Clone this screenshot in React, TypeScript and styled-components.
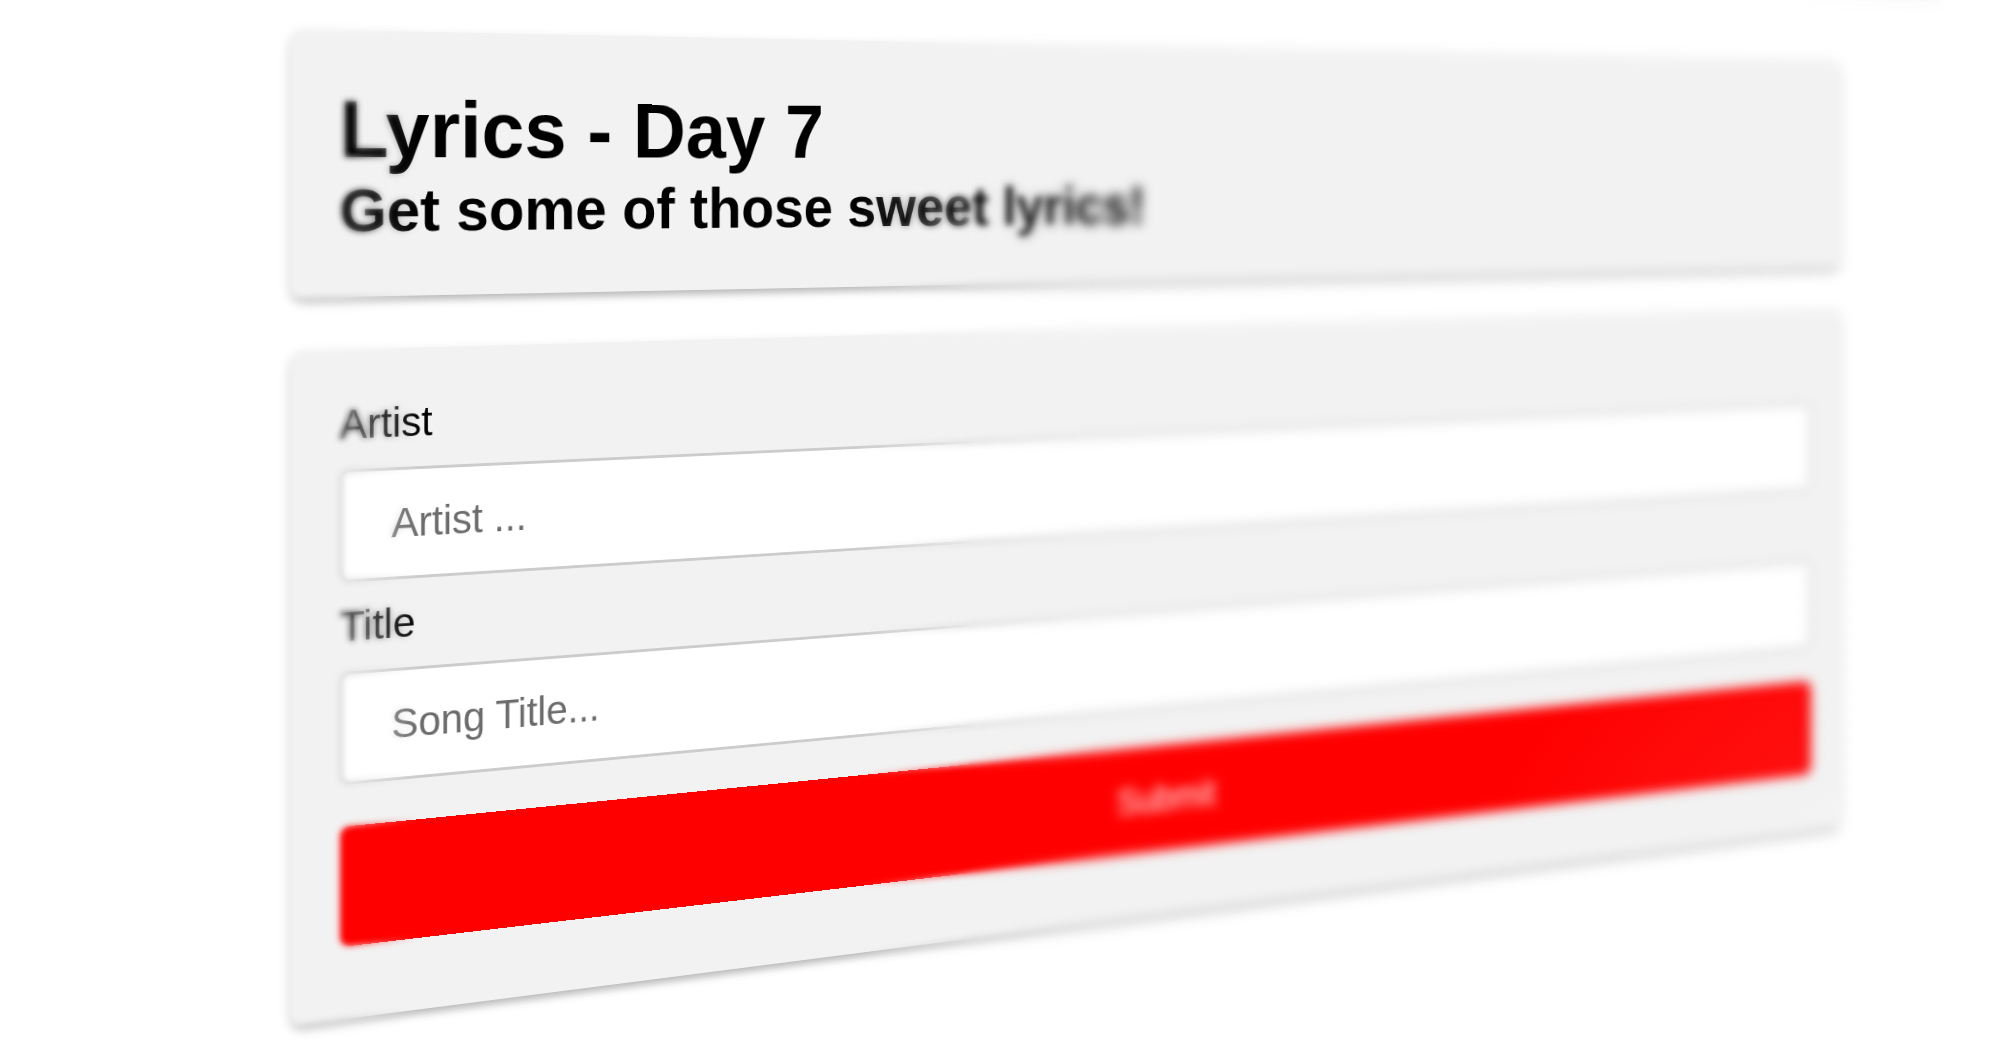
import React, { FormEvent } from "react";
import styled, { createGlobalStyle } from "styled-components";

const GlobalStyle = createGlobalStyle`
  *, *::before, *::after { box-sizing: border-box; }
  body {
    margin: 0;
    background: #fff;
    color: #000;
    font-family: "Liberation Sans", Arial, Helvetica, sans-serif;
  }
`;

/* The viewer's window onto the tilted page. */
const Stage = styled.div`
  position: relative;
  min-height: 100vh;
  overflow: hidden;
  perspective: 3000px;
  perspective-origin: 50% 166px;
`;

const Plane = styled.div`
  display: flex;
  flex-direction: column;
  gap: 52px;
  width: calc(100vw + 24px);
  margin-top: -143px;
  margin-left: 290px;
  transform-origin: 0 0;
  transform: rotateY(26.6deg);
`;

const TopBar = styled.div`
  height: 88px;
  margin: 0 -172px 32px;
  background: #fff;
  box-shadow: 0 4px 10px rgba(0, 0, 0, 0.06);
`;

const Content = styled.main`
  display: flex;
  flex-direction: column;
  gap: 53px;
`;

const Card = styled.section`
  padding: 52px 50px;
  border-radius: 12px;
  background: #f2f2f2;
  box-shadow:
    0 6px 10px -2px rgba(0, 0, 0, 0.26),
    0 3px 12px rgba(0, 0, 0, 0.08);
`;

const Title = styled.h1`
  margin: 0;
  font-size: 82px;
  line-height: 95px;
  font-weight: 700;
`;

const Subtitle = styled.h2`
  margin: 0;
  font-size: 62px;
  line-height: 70px;
  font-weight: 700;
`;

const Form = styled.form`
  display: flex;
  flex-direction: column;
  gap: 21px;
`;

const Label = styled.label`
  font-size: 42px;
  line-height: 48px;
`;

const TextInput = styled.input`
  width: 100%;
  height: 114px;
  padding: 0 50px;
  border: 3px solid #ccc;
  border-radius: 10px;
  background: #fff;
  color: #000;
  font-family: inherit;
  font-size: 42px;

  &::placeholder {
    color: #6c6c6c;
    opacity: 1;
  }
`;

const SubmitButton = styled.button`
  height: 121px;
  margin: 21px 0;
  border: 0;
  border-radius: 10px;
  background: #f00;
  color: #fff;
  font-family: inherit;
  font-size: 42px;
  cursor: pointer;
`;

/* Depth of field: softens what lies outside the focal strip. */
const Focus = styled.div<{ $blur: number; $mask: string }>`
  position: absolute;
  inset: 0;
  pointer-events: none;
  backdrop-filter: blur(${(p) => p.$blur}px);
  mask-image: ${(p) => p.$mask};
`;

const Glow = styled.div`
  position: absolute;
  inset: 0;
  pointer-events: none;
  background: radial-gradient(circle at 100% 100%, rgba(255, 255, 255, 0.16), rgba(255, 255, 255, 0) 25%);
`;

export default function App() {
  const handleSubmit = (event: FormEvent) => event.preventDefault();

  return (
    <>
      <GlobalStyle />
      <Stage>
        <Plane>
          <TopBar />
          <Content>
            <Card>
              <Title>Lyrics - Day 7</Title>
              <Subtitle>Get some of those sweet lyrics!</Subtitle>
            </Card>
            <Card>
              <Form onSubmit={handleSubmit}>
                <Label htmlFor="artist">Artist</Label>
                <TextInput id="artist" name="artist" type="text" placeholder="Artist ..." />
                <Label htmlFor="title">Title</Label>
                <TextInput id="title" name="title" type="text" placeholder="Song Title..." />
                <SubmitButton type="submit">Submit</SubmitButton>
              </Form>
            </Card>
          </Content>
        </Plane>
        <Focus $blur={3} $mask="linear-gradient(to right, #000 17%, transparent 21%)" />
        <Focus $blur={3} $mask="linear-gradient(to right, transparent 43%, #000 49%)" />
        <Focus $blur={5} $mask="linear-gradient(to right, transparent 48%, #000 55%)" />
        <Glow />
      </Stage>
    </>
  );
}
